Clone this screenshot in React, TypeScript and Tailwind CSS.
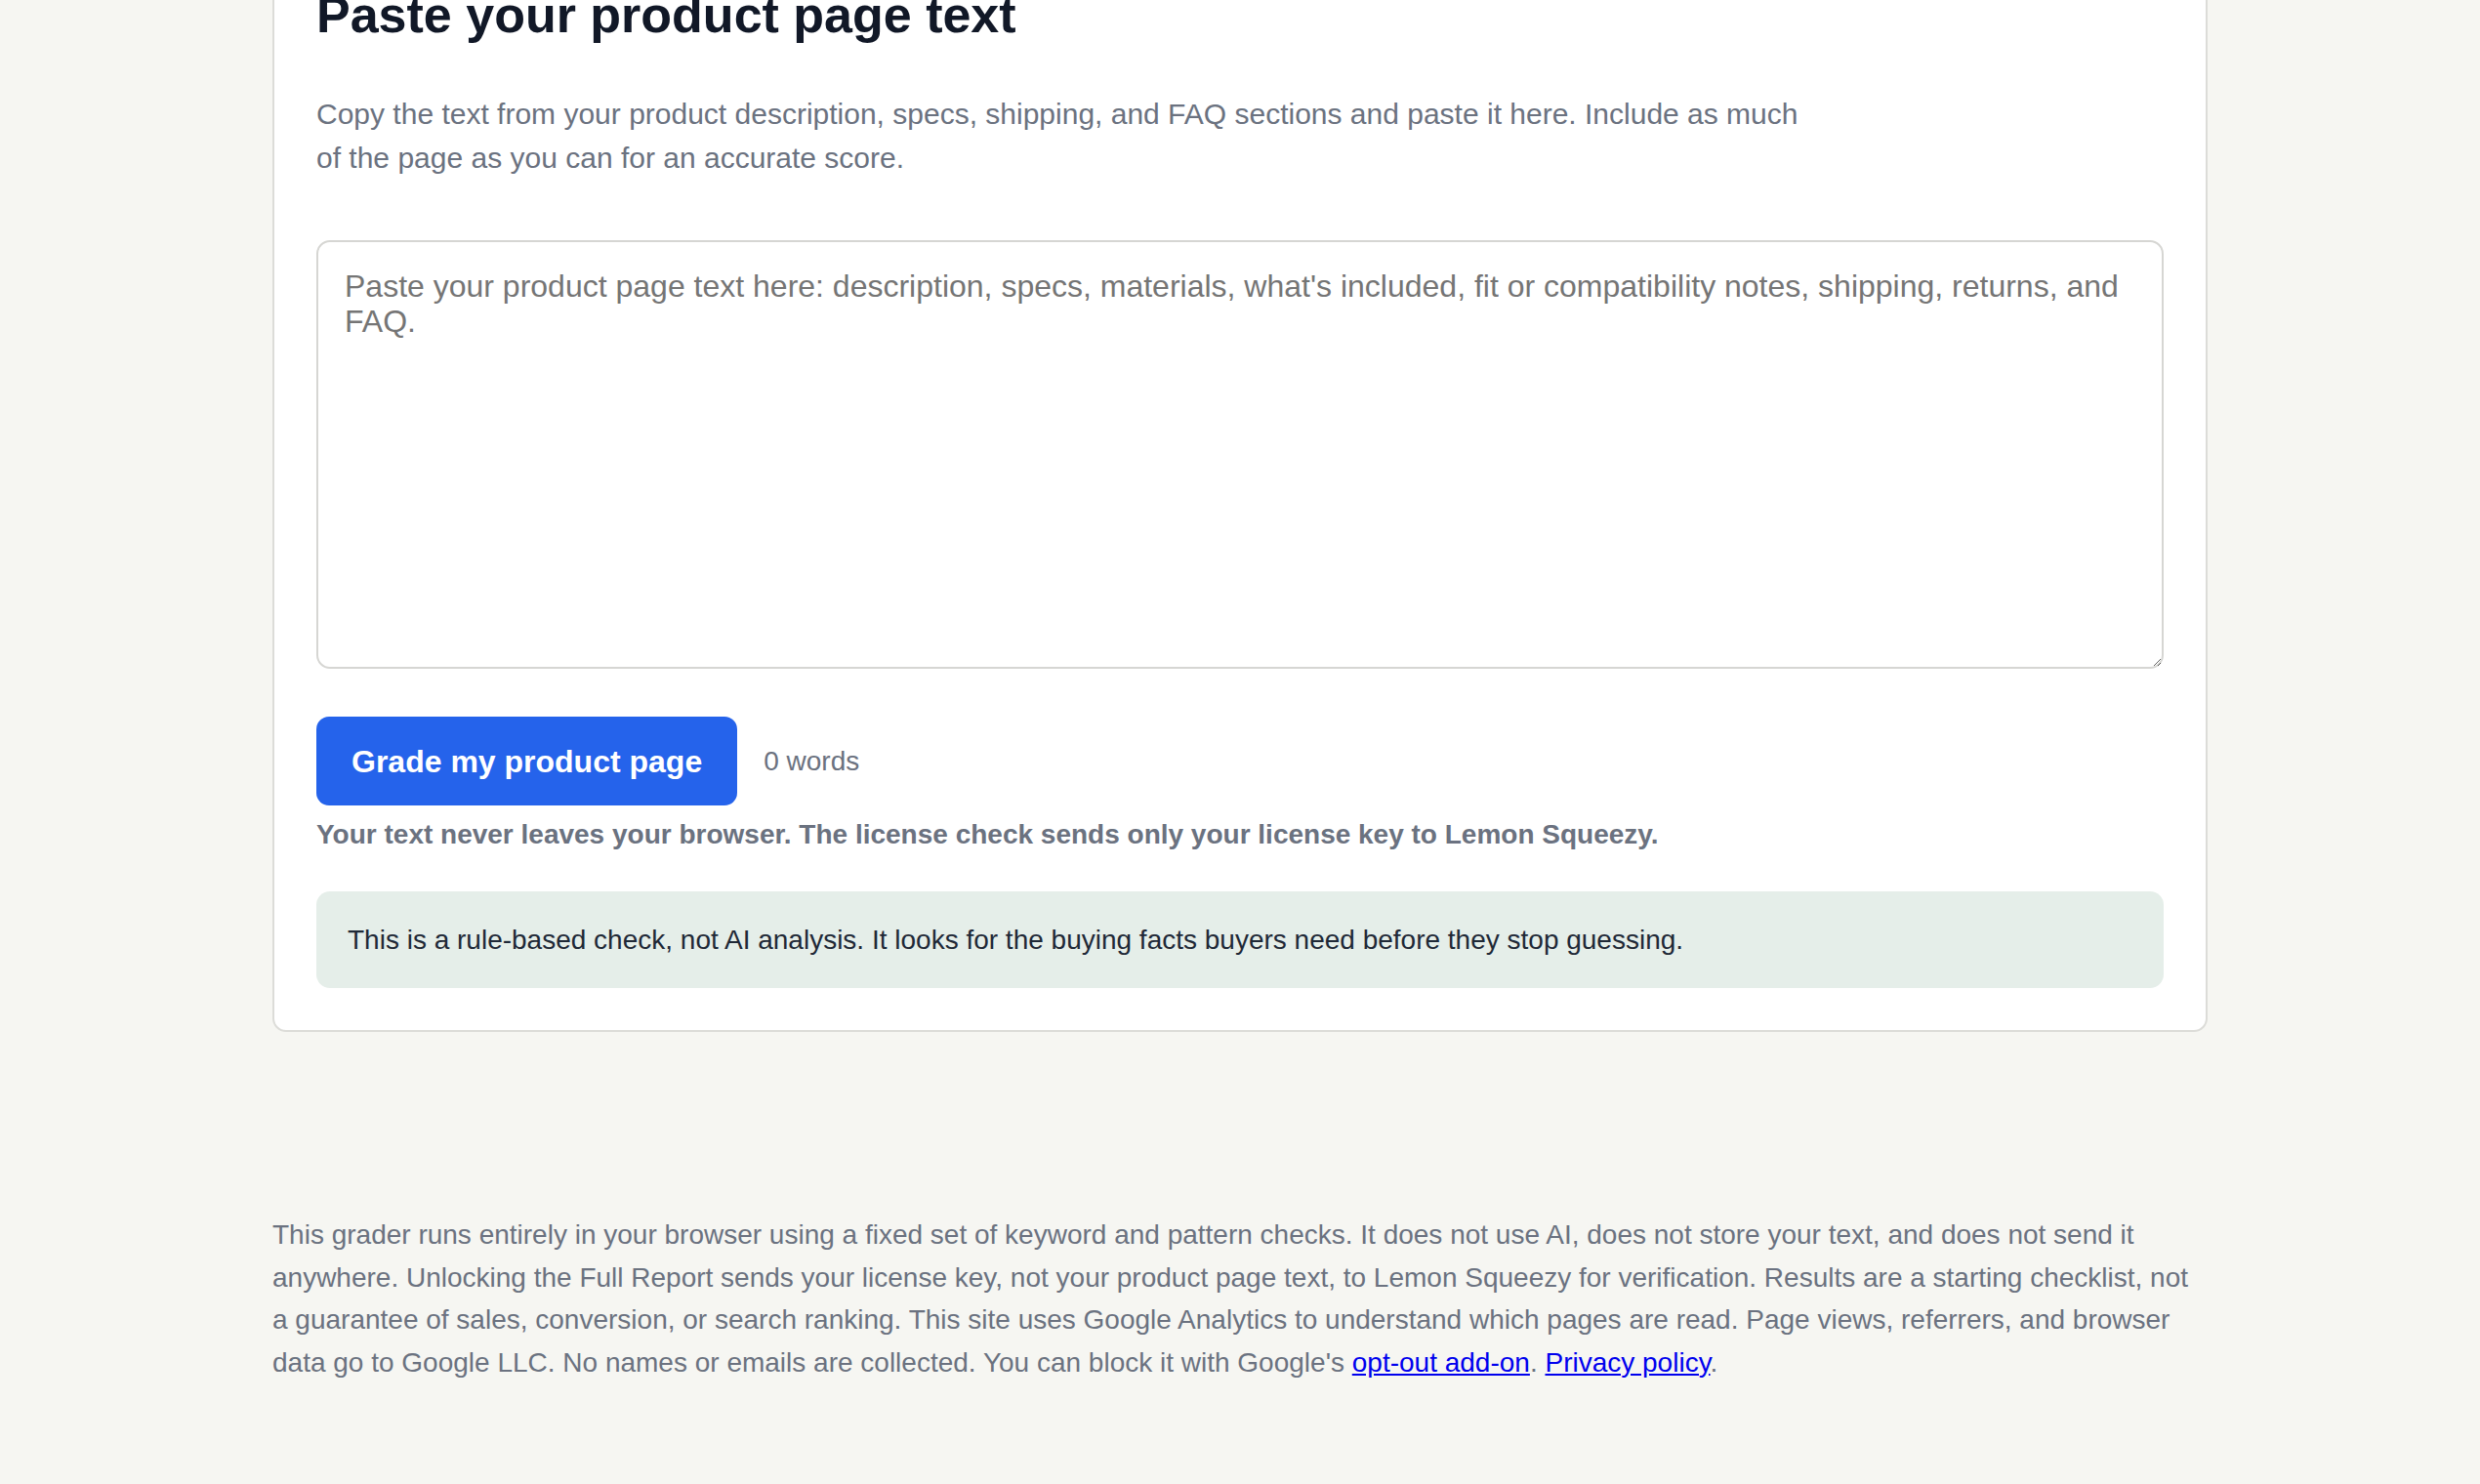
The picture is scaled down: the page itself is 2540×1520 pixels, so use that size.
import React from 'react';

const font = { fontFamily: '"Liberation Sans", Arial, Helvetica, sans-serif' };

function GraderCard() {
  const [text, setText] = React.useState('');
  const words = text.trim() ? text.trim().split(/\s+/).length : 0;

  return (
    <section className="bg-white border-2 border-[#dcdcd8] rounded-[14px] px-[43px] pt-[43px] pb-[43px]">
      <h2 className="text-[52px] leading-[62px] font-bold text-[#111827]">Paste your product page text</h2>
      <p className="mt-[48px] max-w-[1530px] text-[30px] leading-[45px] text-[#6b7280]">
        Copy the text from your product description, specs, shipping, and FAQ sections and paste it here. Include as much of the page as you can for an accurate score.
      </p>
      <textarea
        value={text}
        onChange={(e) => setText(e.target.value)}
        placeholder="Paste your product page text here: description, specs, materials, what's included, fit or compatibility notes, shipping, returns, and FAQ."
        className="mt-[62px] block w-full h-[439px] border-2 border-[#d6d6d3] rounded-[14px] px-[27px] py-[27px] text-[32px] leading-[36px] text-[#111827] placeholder:text-[#757575] outline-none"
        style={font}
      />
      <div className="mt-[49px] flex items-center gap-[27px]">
        <button className="h-[91px] px-[36px] rounded-[13px] bg-[#2563eb] text-white text-[32px] font-bold">
          Grade my product page
        </button>
        <span className="text-[28px] text-[#6b7280]">{words} words</span>
      </div>
      <p className="mt-[8px] text-[28px] leading-[44px] font-bold text-[#6b7280]">
        Your text never leaves your browser. The license check sends only your license key to Lemon Squeezy.
      </p>
      <div className="mt-[36px] rounded-[14px] bg-[#e5eee9] px-[32px] py-[28px] text-[28px] leading-[43px] text-[#1f2937]">
        This is a rule-based check, not AI analysis. It looks for the buying facts buyers need before they stop guessing.
      </div>
    </section>
  );
}

export default function App() {
  return (
    <div className="min-h-screen bg-[#f6f6f2]" style={font}>
      <main className="w-[1982px] mx-auto -mt-[61px] pb-[120px]">
        <GraderCard />
        <footer className="mt-[186px] text-[28px] leading-[43.5px] text-[#6b7280]">
          This grader runs entirely in your browser using a fixed set of keyword and pattern checks. It does not use AI, does not store your text, and does not send it anywhere. Unlocking the Full Report sends your license key, not your product page text, to Lemon Squeezy for verification. Results are a starting checklist, not a guarantee of sales, conversion, or search ranking. This site uses Google Analytics to understand which pages are read. Page views, referrers, and browser data go to Google LLC. No names or emails are collected. You can block it with Google's{' '}
          <a href="#" className="text-[#0000ee] underline">opt-out add-on</a>.{' '}
          <a href="#" className="text-[#0000ee] underline">Privacy policy</a>.
        </footer>
      </main>
    </div>
  );
}
